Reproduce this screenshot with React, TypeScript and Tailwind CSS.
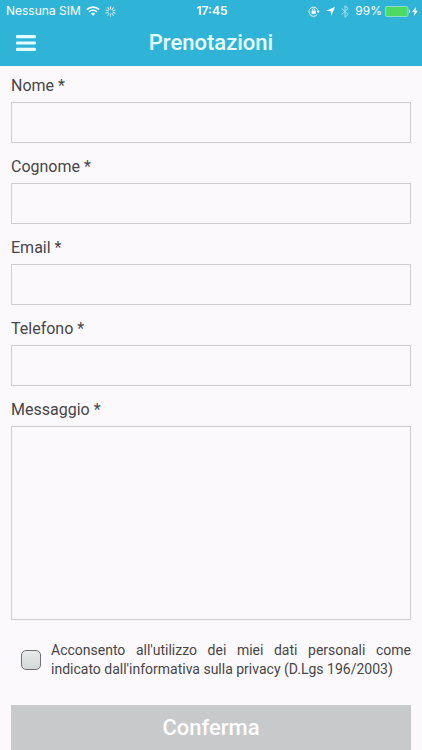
import { useState } from 'react';

const fields = [
  { id: 'nome', label: 'Nome *', type: 'text' },
  { id: 'cognome', label: 'Cognome *', type: 'text' },
  { id: 'email', label: 'Email *', type: 'email' },
  { id: 'telefono', label: 'Telefono *', type: 'tel' },
];

function WifiIcon() {
  return (
    <svg width="14" height="10" viewBox="0 0 14 10" fill="none" stroke="currentColor" strokeWidth="1.7">
      <path d="M0.8 3.6a8.8 8.8 0 0 1 12.4 0" />
      <path d="M3 5.9a5.7 5.7 0 0 1 8 0" />
      <path d="M7 9.8 4.9 7.7a3 3 0 0 1 4.2 0z" fill="currentColor" stroke="none" />
    </svg>
  );
}

function SpinnerIcon() {
  const spokes = [1, 0.9, 0.85, 0.8, 0.7, 0.65, 0.6, 0.7, 0.8, 0.9];
  return (
    <svg width="11" height="11" viewBox="0 0 11 11" stroke="currentColor" strokeWidth="1" strokeLinecap="round">
      {spokes.map((opacity, i) => (
        <path key={i} d="M5.5 0.7v2.3" opacity={opacity} transform={`rotate(${i * 36} 5.5 5.5)`} />
      ))}
    </svg>
  );
}

function RotationLockIcon() {
  return (
    <svg width="12" height="11" viewBox="0 0 12 11" fill="none" stroke="currentColor">
      <path d="M9.3 8.4A4.6 4.6 0 1 1 10.1 5" strokeWidth="0.9" />
      <path d="M8.6 4.9h3.2l-1.6 2.2z" fill="currentColor" stroke="none" />
      <rect x="3.5" y="4.8" width="4.2" height="3.2" fill="currentColor" stroke="none" />
      <path d="M4.4 5V3.9a1.2 1.2 0 0 1 2.4 0V5" strokeWidth="0.8" />
    </svg>
  );
}

function StatusBar() {
  return (
    <div className="grid h-5 grid-cols-[1fr_auto_1fr] items-center pt-0.5 pl-[6px] pr-1 font-['Inter',sans-serif] text-xs text-white">
      <div className="flex items-center gap-[5px]">
        <span>Nessuna SIM</span>
        <WifiIcon />
        <SpinnerIcon />
      </div>
      <span className="font-semibold">17:45</span>
      <div className="flex items-center justify-end">
        <RotationLockIcon />
        <svg className="ml-1.5" width="9" height="9" viewBox="0 0 9 9" fill="currentColor">
          <path d="M9 0 5.3 8.8 4.7 4.3 0 3.8z" />
        </svg>
        <svg className="ml-1.5 opacity-60" width="8" height="13" viewBox="0 0 8 13" fill="none" stroke="currentColor" strokeWidth="1">
          <path d="M0.5 3.4 7.2 9.4 4 12.3V0.7l3.2 2.9L0.5 9.6" />
        </svg>
        <span className="ml-1.5">99%</span>
        <svg className="ml-[3px]" width="26" height="11" viewBox="0 0 26 11">
          <rect x="0.5" y="0.5" width="22.5" height="10" rx="1.5" fill="#4cd964" stroke="#a4e5d0" strokeWidth="0.8" />
          <path d="M24 3.7c1.5.5 1.5 3.1 0 3.6z" fill="white" />
        </svg>
        <svg className="ml-px" width="6" height="9" viewBox="0 0 6 9" fill="currentColor">
          <path d="M4 0 0 5h2.5L1.8 9 6 3.8H3.4z" />
        </svg>
      </div>
    </div>
  );
}

function Header() {
  return (
    <header className="bg-[#2fb4d8]">
      <StatusBar />
      <div className="grid h-[46px] grid-cols-[1fr_auto_1fr] items-center px-4">
        <button type="button" aria-label="Menu" className="w-5 text-[#e4fbff]">
          <svg width="20" height="16" viewBox="0 0 20 16" fill="currentColor">
            <rect width="20" height="3.2" rx="1" />
            <rect y="6.4" width="20" height="3.2" rx="1" />
            <rect y="12.8" width="20" height="3.2" rx="1" />
          </svg>
        </button>
        <h1 className="text-[22px] leading-6 font-medium text-[#e9fcff]">Prenotazioni</h1>
      </div>
    </header>
  );
}

export default function App() {
  const [accepted, setAccepted] = useState(false);

  return (
    <div className="bg-[#fbf9fb] font-['Roboto',sans-serif] text-[#474548]">
      <Header />
      <form className="px-[11px] pt-2" onSubmit={(e) => e.preventDefault()}>
        <div className="flex flex-col gap-3">
          {fields.map((field) => (
            <div key={field.id} className="flex flex-col gap-1">
              <label htmlFor={field.id} className="text-base leading-6">
                {field.label}
              </label>
              <input
                id={field.id}
                type={field.type}
                className="h-[41px] w-full border border-[#cfcdcf] bg-transparent px-2 outline-none"
              />
            </div>
          ))}
          <div className="flex flex-col gap-1">
            <label htmlFor="messaggio" className="text-base leading-6">
              Messaggio *
            </label>
            <textarea
              id="messaggio"
              className="block h-[194px] w-full resize-none border border-[#cfcdcf] bg-transparent p-2 outline-none"
            />
          </div>
        </div>

        <div className="mt-[21px] flex items-center gap-[10px] pl-[10px]">
          <input
            id="privacy"
            type="checkbox"
            checked={accepted}
            onChange={(e) => setAccepted(e.target.checked)}
            className="size-5 shrink-0 appearance-none rounded-[5px] border border-[#727272] bg-linear-to-b from-[#e9ebea] to-[#d3d6d6] checked:to-[#2fb4d8]"
          />
          <label htmlFor="privacy" className="text-justify text-sm leading-[19px]">
            Acconsento all'utilizzo dei miei dati personali come indicato dall'informativa sulla privacy (D.Lgs 196/2003)
          </label>
        </div>

        <button type="submit" className="mt-[26px] block h-[45px] w-full bg-[#c7c9cb] text-[22px] font-medium text-white">
          Conferma
        </button>
      </form>
    </div>
  );
}
